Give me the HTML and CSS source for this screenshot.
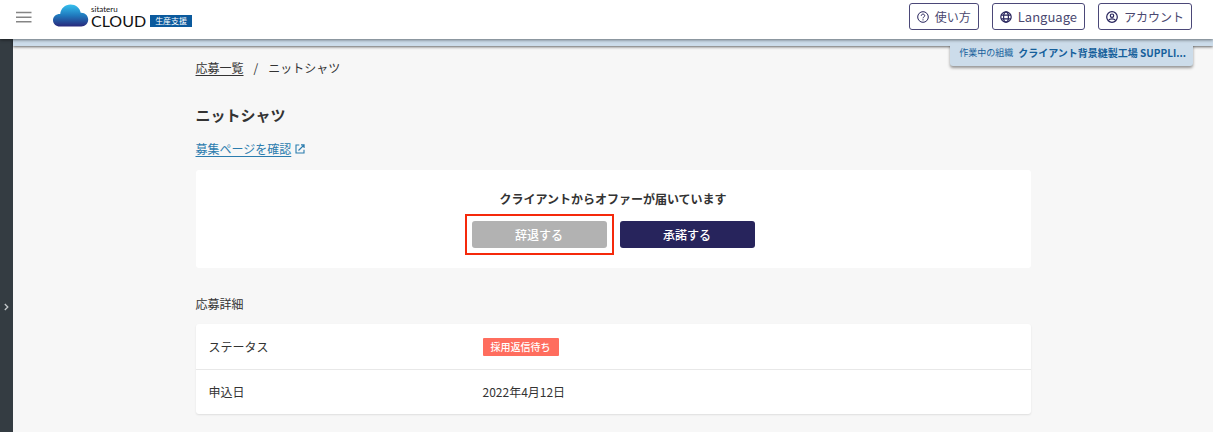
FILE: index.html
```html
<!DOCTYPE html>
<html lang="ja">
<head>
  <meta charset="UTF-8">
  <meta name="viewport" content="width=device-width, initial-scale=1.0">
  <title>ニットシャツ</title>
  <link rel="stylesheet" href="styles.css">
</head>
<body>
  <header class="header">
    <button class="menu-button" type="button" aria-label="menu">
      <svg width="16" height="12" viewBox="0 0 16 12" fill="none" stroke="#858585" stroke-width="1.5"><path d="M0 1.5h15.500M0 6.200h15.500M0 10.800h15.500"/></svg>
    </button>
    <a class="logo" href="#">
      <svg class="logo-cloud" width="36" height="23" viewBox="0 0 36 23">
        <defs>
          <linearGradient id="cloud" x1="0" y1="0" x2="0" y2="1">
            <stop offset="0" stop-color="#35c0ee"/>
            <stop offset="0.500" stop-color="#2079bd"/>
            <stop offset="1" stop-color="#28287b"/>
          </linearGradient>
        </defs>
        <path fill="url(#cloud)" d="M7 22.500C3 22.500 0 19.800 0 16.200c0-3.700 3-6.300 7.200-6.200C7.800 4.500 12 .5 17.500.5c5.200 0 9.300 3.200 10.200 8.200 4.300-.3 7.500 2.800 7.500 6.900 0 4-3 6.900-7 6.900z"/>
      </svg>
      <span class="logo-text">
        <span class="logo-small">sitateru</span>
        <span class="logo-large">CLOUD</span>
      </span>
      <span class="logo-label">生産支援</span>
    </a>
    <nav class="header-nav">
      <button class="nav-button" type="button">
        <svg width="12" height="12" viewBox="0 0 12 12" fill="none" stroke="#27245c"><circle cx="6" cy="6" r="5.300"/><path d="M4.300 4.800c0-1 .7-1.700 1.700-1.700s1.700.7 1.700 1.600c0 1.200-1.700 1.300-1.700 2.600M6 8.300v1.100"/></svg>
        使い方
      </button>
      <button class="nav-button nav-language" type="button">
        <svg width="12" height="12" viewBox="0 0 12 12" fill="none" stroke="#27245c" stroke-width="1.200"><circle cx="6" cy="6" r="5.200"/><ellipse cx="6" cy="6" rx="2.400" ry="5.200"/><path d="M1.200 4.200h9.600M1.200 7.800h9.600"/></svg>
        Language
      </button>
      <button class="nav-button" type="button">
        <svg width="12" height="12" viewBox="0 0 12 12" fill="none" stroke="#27245c" stroke-width="1.200"><circle cx="6" cy="6" r="5.300"/><circle cx="6" cy="4.700" r="1.700"/><path d="M2.300 9.500C3.200 8.300 4.500 7.900 6 7.900s2.800.4 3.700 1.600"/></svg>
        アカウント
      </button>
    </nav>
  </header>
  <div class="layout">
    <aside class="sidebar">
      <button class="sidebar-toggle" type="button" aria-label="open">
        <svg width="5" height="8" viewBox="0 0 5 8" fill="none" stroke="#c4c8ca" stroke-width="1.300"><path d="M.8 1l3 3-3 3"/></svg>
      </button>
    </aside>
    <div class="content">
      <div class="org-bar">
        <div class="org">
          <span class="org-label">作業中の組織</span>
          <span class="org-name">クライアント背景縫製工場 SUPPLI...</span>
        </div>
      </div>
      <main class="main">
        <nav class="breadcrumb">
          <a href="#">応募一覧</a>
          <span>/</span>
          <span>ニットシャツ</span>
        </nav>
        <h1 class="title">ニットシャツ</h1>
        <a class="page-link" href="#">
          <span>募集ページを確認</span>
          <svg width="10" height="10" viewBox="0 0 10 10" fill="none" stroke="#2b7cae" stroke-width="1.100"><path d="M4.300 1H1v8h8V5.700M6 .9h3.100V4M9 1L3.500 6.500"/></svg>
        </a>
        <section class="offer">
          <h2 class="offer-title">クライアントからオファーが届いています</h2>
          <div class="offer-buttons">
            <div class="highlight">
              <button class="button decline" type="button">辞退する</button>
            </div>
            <button class="button accept" type="button">承諾する</button>
          </div>
        </section>
        <h2 class="section-title">応募詳細</h2>
        <table class="detail">
          <tr>
            <th scope="row">ステータス</th>
            <td><span class="status">採用返信待ち</span></td>
          </tr>
          <tr>
            <th scope="row">申込日</th>
            <td>2022年4月12日</td>
          </tr>
        </table>
      </main>
    </div>
  </div>
</body>
</html>
```
FILE: styles.css
```css
* {
  box-sizing: border-box;
}
body {
  margin: 0;
  min-height: 100vh;
  display: flex;
  flex-direction: column;
  background: #f7f7f7;
  color: #333;
  font-family: "Noto Sans CJK JP", sans-serif;
  font-size: 12px;
  line-height: 18px;
}
button {
  font-family: inherit;
  cursor: pointer;
}
svg {
  display: block;
  flex-shrink: 0;
}

/* header */
.header {
  position: relative;
  z-index: 3;
  display: flex;
  align-items: center;
  height: 39px;
  padding: 0 21px 6px 16px;
  background: #fff;
  box-shadow: 0 1px 3px rgba(0, 0, 0, 0.5);
}
.menu-button {
  padding: 0;
  border: 0;
  background: none;
}
.logo {
  display: flex;
  align-items: flex-end;
  margin-left: 21px;
  color: #111;
  text-decoration: none;
}
.logo-cloud {
  margin-bottom: 2px;
}
.logo-text {
  display: flex;
  flex-direction: column;
  margin-left: 2px;
  font-family: Lato, sans-serif;
}
.logo-small {
  font-size: 8px;
  line-height: 8px;
}
.logo-large {
  font-size: 16px;
  line-height: 16px;
}
.logo-label {
  margin: 0 0 2px 4px;
  padding: 0 5px;
  background: #0b5a9d;
  color: #fff;
  font-size: 8px;
  line-height: 12px;
}
.header-nav {
  display: flex;
  gap: 13px;
  margin-left: auto;
}
.nav-button {
  display: flex;
  align-items: center;
  gap: 6px;
  height: 27px;
  padding: 0 7px;
  border: 1px solid #4b4878;
  border-radius: 3px;
  background: #fff;
  color: #4a4870;
  font-size: 12px;
}
.nav-language {
  font-size: 13px;
}

/* layout */
.layout {
  display: flex;
  flex: 1;
}
.sidebar {
  width: 13px;
  padding-top: 264px;
  background: #343c42;
}
.sidebar-toggle {
  display: flex;
  justify-content: center;
  width: 100%;
  padding: 0;
  border: 0;
  background: none;
}
.content {
  flex: 1;
  min-width: 0;
}
.org-bar {
  position: relative;
  height: 7px;
  background: #ccdcea;
  box-shadow: 0 1px 3px rgba(0, 0, 0, 0.6);
}
.org {
  position: absolute;
  top: 4px;
  right: 20px;
  display: flex;
  align-items: center;
  gap: 5px;
  height: 23px;
  padding: 0 7px 3px 9px;
  border-radius: 0 0 3px 3px;
  background: #ccdcea;
  box-shadow: 0 2px 3px rgba(0, 0, 0, 0.4);
  clip-path: inset(3px -6px -6px -6px);
  color: #155f9b;
  white-space: nowrap;
}
.org-label {
  font-size: 9px;
}
.org-name {
  font-size: 10px;
  font-weight: bold;
}

/* main */
.main {
  width: 100%;
  max-width: 835px;
  margin: 0 auto;
  padding: 13px 0 18px;
}
.breadcrumb {
  display: flex;
  gap: 10px;
}
.breadcrumb a {
  color: inherit;
  text-underline-offset: 2px;
}
.title {
  margin: 26px 0 13px;
  font-size: 15px;
  line-height: 24px;
}
.page-link {
  display: flex;
  align-items: center;
  gap: 4px;
  width: fit-content;
  color: #2b7cae;
  text-decoration: none;
}
.page-link span {
  text-decoration: underline;
  text-underline-offset: 2px;
}
.offer {
  margin-top: 12px;
  padding: 20px 0;
  border-radius: 3px;
  background: #fff;
}
.offer-title {
  margin: 0 0 13px;
  font-size: 12px;
  line-height: 18px;
  text-align: center;
}
.offer-buttons {
  display: flex;
  justify-content: center;
  gap: 13px;
}
.button {
  display: block;
  width: 135px;
  height: 27px;
  padding: 0;
  border: 0;
  border-radius: 3px;
  color: #fff;
  font-size: 12px;
  font-weight: 500;
}
.decline {
  background: #b2b2b2;
}
.accept {
  background: #27245c;
}
.highlight {
  position: relative;
}
.highlight::after {
  content: "";
  position: absolute;
  inset: -7px;
  border: 2px solid #f5290b;
  pointer-events: none;
}
.section-title {
  margin: 27px 0 11px;
  font-size: 12px;
  font-weight: normal;
  line-height: 18px;
}
.detail {
  width: 100%;
  border-spacing: 0;
  border-radius: 3px;
  background: #fff;
  box-shadow: 0 1px 2px rgba(0, 0, 0, 0.1);
}
.detail th,
.detail td {
  height: 45px;
  padding: 0 13px;
  font-weight: normal;
  text-align: left;
}
.detail th {
  width: 274px;
}
.detail tr + tr th,
.detail tr + tr td {
  border-top: 1px solid #e8e8e8;
}
.status {
  display: block;
  width: fit-content;
  padding: 0 8px;
  border-radius: 1px;
  background: #ff6d5e;
  color: #fff;
  font-size: 10px;
  font-weight: 500;
}
```
